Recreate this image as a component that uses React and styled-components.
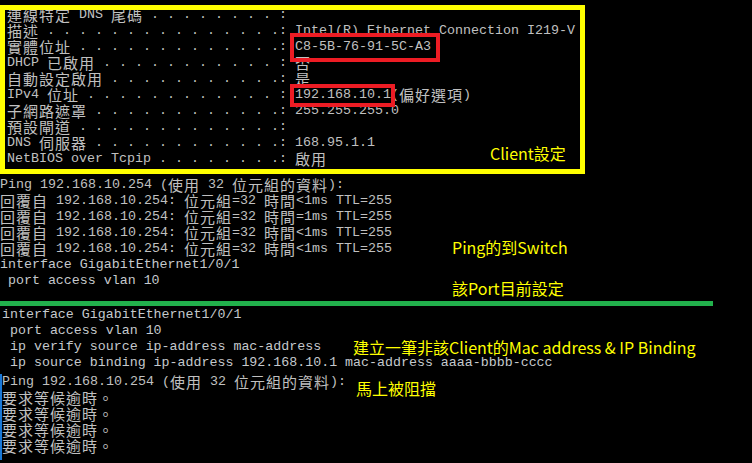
import React from "react"
import styled, { createGlobalStyle } from "styled-components"

const GlobalStyle = createGlobalStyle`
  html, body {
    margin: 0;
    padding: 0;
    background: #000;
  }
`

const Screen = styled.div`
  position: relative;
  display: flex;
  flex-direction: column;
  width: 752px;
  height: 463px;
  background: #000;
  overflow: hidden;
`

/* ipconfig part, framed in yellow */
const IpPanel = styled.section`
  position: relative;
  display: flex;
  flex-direction: column;
  height: 177px;
  box-sizing: border-box;
  padding: 7px 0 0 7px;
`

const Frame = styled.div`
  position: absolute;
  left: 0;
  top: 5px;
  width: 585px;
  height: 169px;
  box-sizing: border-box;
  border: 5px solid #ffff00;
  pointer-events: none;
`

const Mark = styled.div`
  position: absolute;
  left: ${(p) => p.$x}px;
  top: ${(p) => p.$y}px;
  width: ${(p) => p.$w}px;
  height: ${(p) => p.$h}px;
  box-sizing: border-box;
  border: 4px solid #ed1c24;
`

const Block = styled.section`
  display: flex;
  flex-direction: column;
`

const ConsoleLine = styled.div`
  height: 16px;
  line-height: 16px;
  white-space: pre;
  font-family: "Liberation Mono", monospace;
  font-size: 13.333px;
  color: #c0c0c0;
`

const CliLine = styled(ConsoleLine)`
  font-size: 13.3px;
  color: #c5c9cd;
`

const Wide = styled.span`
  display: inline-block;
  height: 16px;
  vertical-align: top;
  font-family: "Noto Sans CJK TC", sans-serif;
  font-size: 15px;
  letter-spacing: 1px;
  line-height: 15px;
`

const Divider = styled.hr`
  margin: 12px 0 0;
  width: 713px;
  height: 5px;
  border: 0;
  background: #22b14c;
`

const CliGroup = styled.div`
  display: flex;
  flex-direction: column;
  padding-left: 2px;
  margin-top: 1px;
`

const Prompt = styled.div`
  display: flex;
  flex-direction: column;
  margin-top: 3px;
  padding: 0 0 6px 0;
  border-left: 2px solid #1a78d6;
`

const Note = styled.div`
  position: absolute;
  left: ${(p) => p.$x}px;
  top: ${(p) => p.$y}px;
  white-space: nowrap;
  font-family: "Noto Sans CJK TC", sans-serif;
  font-size: 16px;
  line-height: 20px;
  color: #ffff00;
`

const WIDE = /([\u2E80-\u9FFF\u3000-\u303F\uFF00-\uFFEF]+)/

const isWide = (ch) => WIDE.test(ch)

function Term({ text }) {
  return text.split(WIDE).map((part, i) =>
    isWide(part.charAt(0)) ? <Wide key={i}>{part}</Wide> : part
  )
}

function leader(label) {
  let pos = 0
  for (const ch of label) pos += isWide(ch) ? 2 : 1
  let s = label
  while (pos + 2 <= 34) {
    s += " ."
    pos += 2
  }
  while (pos < 34) {
    s += " "
    pos++
  }
  return s + ": "
}

const ipconfig = [
  ["連線特定 DNS 尾碼", ""],
  ["描述", "Intel(R) Ethernet Connection I219-V"],
  ["實體位址", "C8-5B-76-91-5C-A3"],
  ["DHCP 已啟用", "否"],
  ["自動設定啟用", "是"],
  ["IPv4 位址", "192.168.10.1(偏好選項)"],
  ["子網路遮罩", "255.255.255.0"],
  ["預設閘道", ""],
  ["DNS 伺服器", "168.95.1.1"],
  ["NetBIOS over Tcpip", "啟用"],
]

const pingHeader = "Ping 192.168.10.254 (使用 32 位元組的資料):"

const replies = [
  "回覆自 192.168.10.254: 位元組=32 時間<1ms TTL=255",
  "回覆自 192.168.10.254: 位元組=32 時間=1ms TTL=255",
  "回覆自 192.168.10.254: 位元組=32 時間<1ms TTL=255",
  "回覆自 192.168.10.254: 位元組=32 時間<1ms TTL=255",
]

const portBefore = ["interface GigabitEthernet1/0/1", " port access vlan 10"]

const portAfter = [
  "interface GigabitEthernet1/0/1",
  " port access vlan 10",
  " ip verify source ip-address mac-address",
  " ip source binding ip-address 192.168.10.1 mac-address aaaa-bbbb-cccc",
]

export default function App() {
  return (
    <>
      <GlobalStyle />
      <Screen>
        <IpPanel>
          {ipconfig.map(([label, value]) => (
            <ConsoleLine key={label}>
              <Term text={leader(label) + value} />
            </ConsoleLine>
          ))}
          <Frame />
        </IpPanel>

        <Block>
          <ConsoleLine>
            <Term text={pingHeader} />
          </ConsoleLine>
          {replies.map((r, i) => (
            <ConsoleLine key={i}>
              <Term text={r} />
            </ConsoleLine>
          ))}
          {portBefore.map((l) => (
            <CliLine key={l}>{l}</CliLine>
          ))}
        </Block>

        <Divider />

        <Block>
          <CliGroup>
            {portAfter.map((l) => (
              <CliLine key={l}>{l}</CliLine>
            ))}
          </CliGroup>
          <Prompt>
            <ConsoleLine>
              <Term text={pingHeader} />
            </ConsoleLine>
            {[0, 1, 2, 3].map((i) => (
              <ConsoleLine key={i}>
                <Term text="要求等候逾時。" />
              </ConsoleLine>
            ))}
          </Prompt>
        </Block>

        <Mark $x={290} $y={33} $w={150} $h={29} />
        <Mark $x={290} $y={84} $w={105} $h={23} />

        <Note $x={490} $y={143}>Client設定</Note>
        <Note $x={452} $y={237}>Ping的到Switch</Note>
        <Note $x={452} $y={278}>該Port目前設定</Note>
        <Note $x={353} $y={337}>建立一筆非該Client的Mac address &amp; IP Binding</Note>
        <Note $x={356} $y={378}>馬上被阻擋</Note>
      </Screen>
    </>
  )
}
